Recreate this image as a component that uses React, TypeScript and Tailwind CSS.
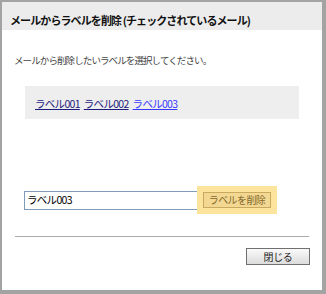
const font = { fontFamily: '"Noto Sans CJK JP", "Noto Sans", sans-serif' };

const App = () => {
  return (
    <div
      className="w-[326px] h-[294px] bg-white border-[#a3a3a3] border-l-2 border-t-2 border-r-[4px] border-b-[4px] flex flex-col"
      style={font}
    >
      <div className="h-[28px] bg-[#ececec] flex items-center pl-[8px] pt-[9px]">
        <h1 className="text-[11px] font-bold text-[#111] tracking-[-0.9px] whitespace-nowrap">
          メールからラベルを削除 (チェックされているメール)
        </h1>
      </div>

      <p className="mt-[24px] ml-[12px] text-[9.5px] text-[#444] tracking-[-0.9px] leading-[12px] whitespace-nowrap">
        メールから削除したいラベルを選択してください。
      </p>

      <div className="mt-[20px] mx-[23px] h-[33px] bg-[#eeeeee] flex items-center gap-[4px] pl-[10px] pt-[2px] text-[10.5px] tracking-[-0.7px]">
        <a href="#" className="underline text-[#1c1c7c]">ラベル001</a>
        <a href="#" className="underline text-[#1c1c7c]">ラベル002</a>
        <a href="#" className="underline text-[#3a3aff]">ラベル003</a>
      </div>

      <div className="mt-[67px] ml-[22px] flex items-center">
        <div className="w-[176px] h-[19px] border border-[#7f9db9] flex items-center pl-[2px] text-[10.5px] text-black tracking-[-0.7px]">
          ラベル003
        </div>
        <div className="-ml-[3px] w-[80px] h-[28px] bg-[#fde49c] flex items-center justify-center">
          <button className="w-[68px] h-[16px] bg-[#f2d892] border border-[#c9a95e] text-[10px] text-[#86692c] tracking-[-0.6px] flex items-center justify-center leading-none">
            ラベルを削除
          </button>
        </div>
      </div>

      <div className="mt-[22px] mx-[13px] h-px bg-[#aaaaaa]" />

      <div className="mt-[11px] flex justify-end pr-[12px]">
        <button className="w-[64px] h-[17px] bg-gradient-to-b from-[#fafafa] to-[#dcdcdc] border border-[#707070] text-[10px] text-[#222] tracking-[-0.3px] flex items-center justify-center leading-none">
          閉じる
        </button>
      </div>
    </div>
  );
};

export default App;
